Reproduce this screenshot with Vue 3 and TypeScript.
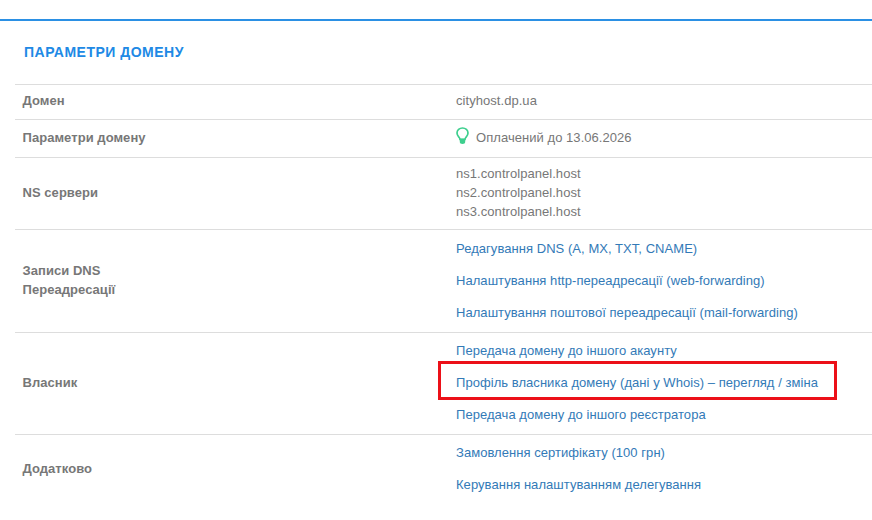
<script setup lang="ts">
interface Link { text: string; boxed?: boolean }
const dnsLinks: Link[] = [
  { text: 'Редагування DNS (A, MX, TXT, CNAME)' },
  { text: 'Налаштування http-переадресації (web-forwarding)' },
  { text: 'Налаштування поштової переадресації (mail-forwarding)' },
]
const ownerLinks: Link[] = [
  { text: 'Передача домену до іншого акаунту' },
  { text: 'Профіль власника домену (дані у Whois) – перегляд / зміна', boxed: true },
  { text: 'Передача домену до іншого реєстратора' },
]
const extraLinks: Link[] = [
  { text: 'Замовлення сертифікату (100 грн)' },
  { text: 'Керування налаштуванням делегування' },
]
const nameservers = ['ns1.controlpanel.host', 'ns2.controlpanel.host', 'ns3.controlpanel.host']
</script>

<template>
  <main class="page">
    <h2 class="title">ПАРАМЕТРИ ДОМЕНУ</h2>
    <section class="table">
      <div class="row row-domain">
        <div class="label">Домен</div>
        <div class="value">cityhost.dp.ua</div>
      </div>
      <div class="row row-params">
        <div class="label">Параметри домену</div>
        <div class="value status">
          <svg class="bulb" width="13" height="18" viewBox="0 0 13 18" aria-hidden="true">
            <path d="M6.500 1C3.400 1 1 3.200 1 6c0 2 1 3.100 2 4.300.6.700.9 1.400 1 2.200h5c.1-.8.4-1.500 1-2.200 1-1.200 2-2.300 2-4.300 0-2.800-2.400-5-5.500-5z" fill="#fff" stroke="#3ecf8e" stroke-width="1.700" />
            <path d="M3.800 11.500h5.400v3.500c0 1.200-1 2-2.700 2s-2.700-.8-2.700-2z" fill="#3ecf8e" />
          </svg>
          <span>Оплачений до 13.06.2026</span>
        </div>
      </div>
      <div class="row row-ns">
        <div class="label">NS сервери</div>
        <div class="value ns">
          <div v-for="ns in nameservers" :key="ns">{{ ns }}</div>
        </div>
      </div>
      <div class="row row-links row-dns">
        <div class="label">Записи DNS<br />Переадресації</div>
        <div class="value links">
          <a v-for="l in dnsLinks" :key="l.text" class="link" href="#">{{ l.text }}</a>
        </div>
      </div>
      <div class="row row-links row-owner">
        <div class="label">Власник</div>
        <div class="value links">
          <a v-for="l in ownerLinks" :key="l.text" class="link" :class="{ boxed: l.boxed }" href="#">{{ l.text }}</a>
        </div>
      </div>
      <div class="row row-links row-extra">
        <div class="label">Додатково</div>
        <div class="value links">
          <a v-for="l in extraLinks" :key="l.text" class="link" href="#">{{ l.text }}</a>
        </div>
      </div>
    </section>
  </main>
</template>

<style>
html, body { margin: 0; background: #fff; overflow: hidden; }
</style>

<style scoped>
.page {
  margin-top: 19px;
  height: 501px;
  box-sizing: border-box;
  border-top: 2px solid #2b90e4;
  padding-left: 15px;
  font-family: "Liberation Sans", Arial, sans-serif;
  font-size: 13px;
  line-height: 19px;
  letter-spacing: 0.05px;
  color: #777;
  background: #fff;
}
.title {
  margin: 0;
  padding: 23px 0 0 9px;
  height: 63px;
  box-sizing: border-box;
  font-size: 14px;
  line-height: 16px;
  font-weight: 700;
  color: #2089e5;
  letter-spacing: 0.5px;
}
.row {
  display: grid;
  grid-template-columns: 433px 1fr;
  align-items: center;
  border-top: 1px solid #ddd;
  box-sizing: border-box;
  padding-bottom: 2px;
}
.row-domain { height: 35px; padding-bottom: 4px; }
.row-params { height: 38px; }
.row-ns { height: 72px; }
.row-dns { height: 103px; }
.row-owner { height: 102px; }
.row-extra { height: 70px; align-items: start; padding-bottom: 0; }
.label { padding-left: 7.5px; font-weight: 700; color: #777; }
.value { padding-left: 8px; }
.status { display: flex; align-items: center; gap: 7px; }
.bulb { flex: none; margin-top: -4px; }
.links { display: flex; flex-direction: column; gap: 13px; }
.link {
  color: #337ab7;
  text-decoration: none;
  position: relative;
  align-self: flex-start;
}
.boxed::after {
  content: "";
  position: absolute;
  left: -18px;
  width: 399px;
  top: -12px;
  height: 39px;
  box-sizing: border-box;
  border: 3px solid #ec1018;
}
.row-extra .label { padding-top: 24px; }
.row-extra .value { padding-top: 8px; }
</style>
